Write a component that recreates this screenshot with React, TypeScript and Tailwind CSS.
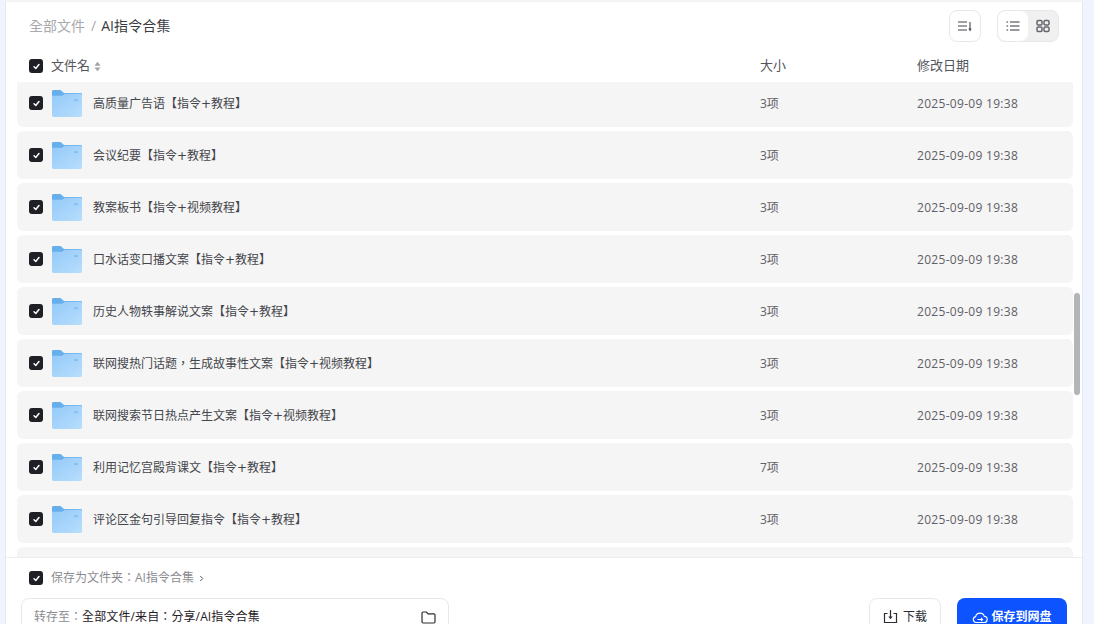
import React from "react";

const rows: [string, string][] = [
  ["高质量广告语【指令+教程】", "3项"],
  ["会议纪要【指令+教程】", "3项"],
  ["教案板书【指令+视频教程】", "3项"],
  ["口水话变口播文案【指令+教程】", "3项"],
  ["历史人物轶事解说文案【指令+教程】", "3项"],
  ["联网搜热门话题，生成故事性文案【指令+视频教程】", "3项"],
  ["联网搜索节日热点产生文案【指令+视频教程】", "3项"],
  ["利用记忆宫殿背课文【指令+教程】", "7项"],
  ["评论区金句引导回复指令【指令+教程】", "3项"],
  ["", ""],
];

function Check() {
  return (
    <span className="flex h-[14px] w-[14px] shrink-0 items-center justify-center rounded-[3px] bg-[#1f2026]">
      <svg width="7" height="7" viewBox="0 0 8 8" fill="none">
        <path d="M1.2 4.2 3.2 6.2 6.8 1.8" stroke="#fff" strokeWidth="1.7" strokeLinecap="round" strokeLinejoin="round" />
      </svg>
    </span>
  );
}

function Folder() {
  return (
    <svg width="30" height="27" viewBox="0 0 30 28" preserveAspectRatio="none" className="mt-[1px] block shrink-0">
      <defs>
        <linearGradient id="fg" x1="0" y1="0" x2="1" y2="1">
          <stop offset="0" stopColor="#93c9f9" />
          <stop offset="1" stopColor="#b8defc" />
        </linearGradient>
      </defs>
      <path d="M0 1.5A1.5 1.5 0 0 1 1.5 0H8.5L12 3H28.5A1.5 1.5 0 0 1 30 4.5V10H0Z" fill="#65b0ec" />
      <path d="M0 6H10L13 4H28.5A1.5 1.5 0 0 1 30 5.5V26.5A1.5 1.5 0 0 1 28.5 28H1.5A1.5 1.5 0 0 1 0 26.5Z" fill="url(#fg)" />
      <rect x="22" y="9.5" width="4" height="2" fill="#86bff3" />
    </svg>
  );
}

export default function App() {
  return (
    <div
      className="flex h-[624px] w-[1094px] overflow-hidden bg-[#eff4fe] pl-[5px] pr-[11px]"
      style={{ fontFamily: '"Open Sans","Noto Sans CJK TC",sans-serif' }}
    >
      <div className="relative flex h-[640px] w-[1078px] flex-col border-t-2 border-t-[#f3f4f6] border-x border-x-[#e4e8f2] bg-white">
        <div className="flex h-[48px] items-center justify-between pl-[23px] pr-[23px]">
          <div className="flex items-center text-[14px] leading-[20px]">
            <span className="text-[#a8a9ad]">全部文件</span>
            <span className="ml-[6px] mr-[5px] text-[#a8a9ad]">/</span>
            <span className="tracking-[0.1px] text-[#3a3b42]">AI指令合集</span>
          </div>
          <div className="flex items-center gap-[16px]">
            <button className="flex h-[32px] w-[32px] items-center justify-center rounded-[8px] border border-[#e8e8e8] bg-white">
              <svg width="16" height="14" viewBox="0 0 16 14" fill="none" stroke="#44454c" strokeWidth="1.1">
                <path d="M1 3h9M1 7h9M1 11h9M13 3v7" />
                <path d="M11.4 9.5h3.2L13 12.5Z" fill="#44454c" stroke="none" />
              </svg>
            </button>
            <div className="flex h-[32px] w-[62px] rounded-[8px] border border-[#e8e8e8] bg-[#f0f0f1]">
              <span className="flex w-[30px] items-center justify-center rounded-[8px] bg-white">
                <svg width="14" height="12" viewBox="0 0 14 12" fill="none" stroke="#33343a" strokeWidth="1.2">
                  <path d="M4 2h9.5M4 6h9.5M4 10h9.5M.5 2h1.6M.5 6h1.6M.5 10h1.6" />
                </svg>
              </span>
              <span className="flex flex-1 items-center justify-center">
                <svg width="14" height="14" viewBox="0 0 14 14" fill="none" stroke="#66676c" strokeWidth="1.5">
                  <rect x="1" y="1.5" width="5" height="4.5" rx="1.2" />
                  <rect x="8" y="1.5" width="5" height="4.5" rx="1.2" />
                  <rect x="1" y="8" width="5" height="4.5" rx="1.2" />
                  <rect x="8" y="8" width="5" height="4.5" rx="1.2" />
                </svg>
              </span>
            </div>
          </div>
        </div>

        <div className="flex h-[32px] items-center pl-[23px] pr-[16px] text-[13px] text-[#55565c]">
          <Check />
          <span className="ml-[8px] flex w-[709px] items-center gap-[4px]">
            文件名
            <svg width="7" height="11" viewBox="0 0 8 11" fill="#a3a3a7">
              <path d="M4 0 7.5 4.5H.5Z" />
              <path d="M4 11 .5 6.5H7.5Z" />
            </svg>
          </span>
          <span className="w-[157px]">大小</span>
          <span>修改日期</span>
        </div>

        <div className="relative flex h-[475px] flex-col gap-[4px] overflow-hidden pl-[11px] pr-[9px]">
          {rows.map(([name, size], i) => (
            <div
              key={i}
              className={`flex h-[48px] shrink-0 items-center rounded-[6px] bg-[#f5f5f5] pl-[12px] ${i === 0 ? "-mt-[3px]" : ""}`}
            >
              {name && (
                <>
                  <Check />
                  <span className="ml-[9px]"><Folder /></span>
                  <span className="ml-[11px] w-[667px] pt-[2px] font-['DejaVu_Sans','Noto_Sans_CJK_TC',sans-serif] text-[12px] text-[#44454b]">{name}</span>
                  <span className="w-[157px] pt-[2px] text-[12px] text-[#5f6066]">{size}</span>
                  <span className="pt-[2px] text-[12px] tracking-[0.3px] text-[#5f6066]">2025-09-09 19:38</span>
                </>
              )}
            </div>
          ))}
          <div className="absolute right-[2px] top-[211px] h-[102px] w-[6px] rounded-full bg-[#b4b5b8]" />
        </div>

        <div className="flex flex-col border-t border-t-[#eeeeee] bg-white">
          <div className="flex h-[40px] items-center pl-[23px] text-[12px] text-[#8a8b90]">
            <Check />
            <span className="ml-[8px]">保存为文件夹：AI指令合集</span>
            <svg className="ml-[5px]" width="5" height="7" viewBox="0 0 6 8" fill="none" stroke="#55565c" strokeWidth="1.2">
              <path d="M1.5 1 4.5 4 1.5 7" />
            </svg>
          </div>
          <div className="flex items-start justify-between pl-[15px] pr-[15px]">
            <div className="flex h-[40px] w-[428px] items-center justify-between rounded-[8px] border border-[#e8e8e8] pl-[12px] pr-[12px] pb-[2px] text-[12px]">
              <span>
                <span className="text-[#8a8b90]">转存至：</span>
                <span className="tracking-[0.12px] text-[#1f2026]">全部文件/来自：分享/AI指令合集</span>
              </span>
              <svg width="15" height="13" viewBox="0 0 15 13" fill="none" stroke="#2c2d33" strokeWidth="1.2">
                <path d="M1 2.2A1.2 1.2 0 0 1 2.2 1H5.5L7 2.8H12.8A1.2 1.2 0 0 1 14 4V10.8A1.2 1.2 0 0 1 12.8 12H2.2A1.2 1.2 0 0 1 1 10.8Z" />
              </svg>
            </div>
            <div className="flex gap-[16px]">
              <button className="flex h-[40px] w-[72px] items-center justify-center gap-[5px] rounded-[8px] border border-[#e8e8e8] bg-white pb-[3px] text-[12px] text-[#2c2d33]">
                <svg width="15" height="15" viewBox="0 0 15 15" fill="none" stroke="#2c2d33" strokeWidth="1.2">
                  <path d="M4.5 4.5H1.5V13.5H13.5V4.5H10.5M7.5 1V9" />
                  <path d="M5.3 7.6H9.7L7.5 10.3Z" fill="#2c2d33" stroke="none" />
                </svg>
                下载
              </button>
              <button className="flex h-[40px] w-[110px] items-center justify-center gap-[3px] rounded-[8px] bg-[#0d53ff] pb-[3px] text-[12px] font-bold text-white">
                <svg width="16" height="14" viewBox="0 0 16 14" fill="none" stroke="#fff" strokeWidth="1.1">
                  <path d="M4 12.5A3 3 0 0 1 3.6 6.6 4.5 4.5 0 0 1 12.3 6.4 3 3 0 0 1 12 12.5Z" />
                  <path d="M5.5 9.5H10.5M9 8 10.5 9.5 9 11" />
                </svg>
                保存到网盘
              </button>
            </div>
          </div>
        </div>
      </div>
    </div>
  );
}
